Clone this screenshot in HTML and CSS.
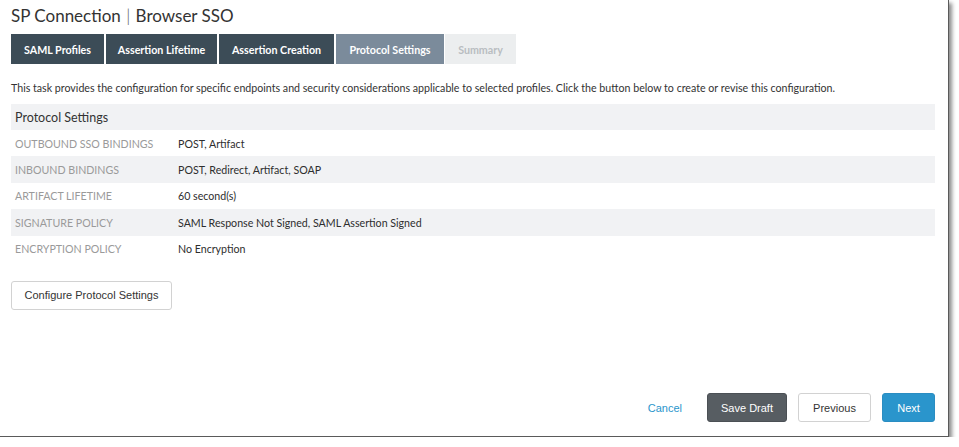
FILE: index.html
```html
<!DOCTYPE html>
<html>
<head>
<meta charset="utf-8">
<link rel="stylesheet" href="styles.css">
</head>
<body>
<div class="frame">
  <h1 class="title">SP Connection <span class="sep">|</span> Browser SSO</h1>
  <div class="tabs">
    <div class="tab done">SAML Profiles</div>
    <div class="tab done">Assertion Lifetime</div>
    <div class="tab done">Assertion Creation</div>
    <div class="tab active">Protocol Settings</div>
    <div class="tab todo">Summary</div>
  </div>
  <p class="intro">This task provides the configuration for specific endpoints and security considerations applicable to selected profiles. Click the button below to create or revise this configuration.</p>
  <div class="table">
    <div class="thead">Protocol Settings</div>
    <div class="row"><div class="lbl">OUTBOUND SSO BINDINGS</div><div class="val">POST, Artifact</div></div>
    <div class="row alt"><div class="lbl">INBOUND BINDINGS</div><div class="val">POST, Redirect, Artifact, SOAP</div></div>
    <div class="row"><div class="lbl">ARTIFACT LIFETIME</div><div class="val">60 second(s)</div></div>
    <div class="row alt"><div class="lbl">SIGNATURE POLICY</div><div class="val">SAML Response Not Signed, SAML Assertion Signed</div></div>
    <div class="row"><div class="lbl">ENCRYPTION POLICY</div><div class="val">No Encryption</div></div>
  </div>
  <button class="btn configure">Configure Protocol Settings</button>
  <div class="footer">
    <a class="cancel">Cancel</a>
    <button class="btn draft">Save Draft</button>
    <button class="btn prev">Previous</button>
    <button class="btn next">Next</button>
  </div>
</div>
</body>
</html>
```
FILE: styles.css
```css
html, body { margin: 0; padding: 0; background: #fff; }
body { font-family: "Lato", "Open Sans", sans-serif; color: #333; }
.frame {
  width: 949px;
  height: 437px;
  padding: 0 13px 0 11px;
  box-sizing: border-box;
  border-right: 1px solid #5a5a5a;
  border-bottom: 1px solid #5a5a5a;
  box-shadow: 3px 3px 4px rgba(0,0,0,0.45);
  display: flex;
  flex-direction: column;
}
.title {
  margin: 0;
  padding-top: 5px;
  height: 29px;
  box-sizing: border-box;
  font-size: 17px;
  font-weight: 400;
  color: #333;
  line-height: 22px;
}
.sep { color: #555; font-weight: 300; margin: 0 1px; }
.tabs { display: flex; gap: 2px; height: 30px; margin-top: 5px; }
.tab {
  display: flex; align-items: center; justify-content: center;
  font-size: 10.7px; font-weight: 700; color: #fff;
  white-space: nowrap;
  box-sizing: border-box;
}
.tab.done { background: #3c4c57; }
.tab:nth-child(1) { width: 93px; }
.tab:nth-child(2) { width: 111px; }
.tab:nth-child(3) { width: 115px; }
.tab:nth-child(4) { width: 108px; }
.tab:nth-child(5) { width: 71px; margin-left: -1px; }
.tab.active { background: #7b8b9b; }
.tab.todo { background: #eceeef; color: #b9bdc1; }
.intro { margin: 17px 0 0; font-size: 10.65px; line-height: 14px; color: #333; }
.table { margin-top: 9px; }
.thead { background: #f1f2f4; height: 26px; display: flex; align-items: center; padding-left: 4px; font-size: 12.5px; color: #333; }
.row { display: flex; align-items: center; height: 26.4px; font-size: 10.65px; }
.row.alt { background: #f1f2f4; }
.lbl { width: 163px; padding-left: 4px; color: #9a9a9a; }
.val { color: #2e2e2e; }
.btn {
  font-family: "Liberation Sans", Arial, sans-serif;
  font-size: 11px;
  border-radius: 3px;
  padding: 0;
  cursor: pointer;
}
.configure {
  align-self: flex-start;
  margin-top: 19px;
  width: 161px; height: 29px;
  background: #fff; border: 1px solid #d2d2d2; color: #333;
}
.footer {
  margin-top: auto;
  margin-bottom: 14px;
  display: flex; justify-content: flex-end; align-items: center; gap: 11px;
}
.cancel { font-family: "Liberation Sans", Arial, sans-serif; font-size: 11px; color: #2a95cc; margin-right: 14px; }
.draft { width: 80px; height: 29px; background: #575d62; border: 1px solid #4b5055; color: #fff; }
.prev { width: 73px; height: 29px; background: #fff; border: 1px solid #d2d2d2; color: #333; }
.next { width: 53px; height: 29px; background: #2a95cc; border: 1px solid #2a8dc2; color: #fff; }
```
